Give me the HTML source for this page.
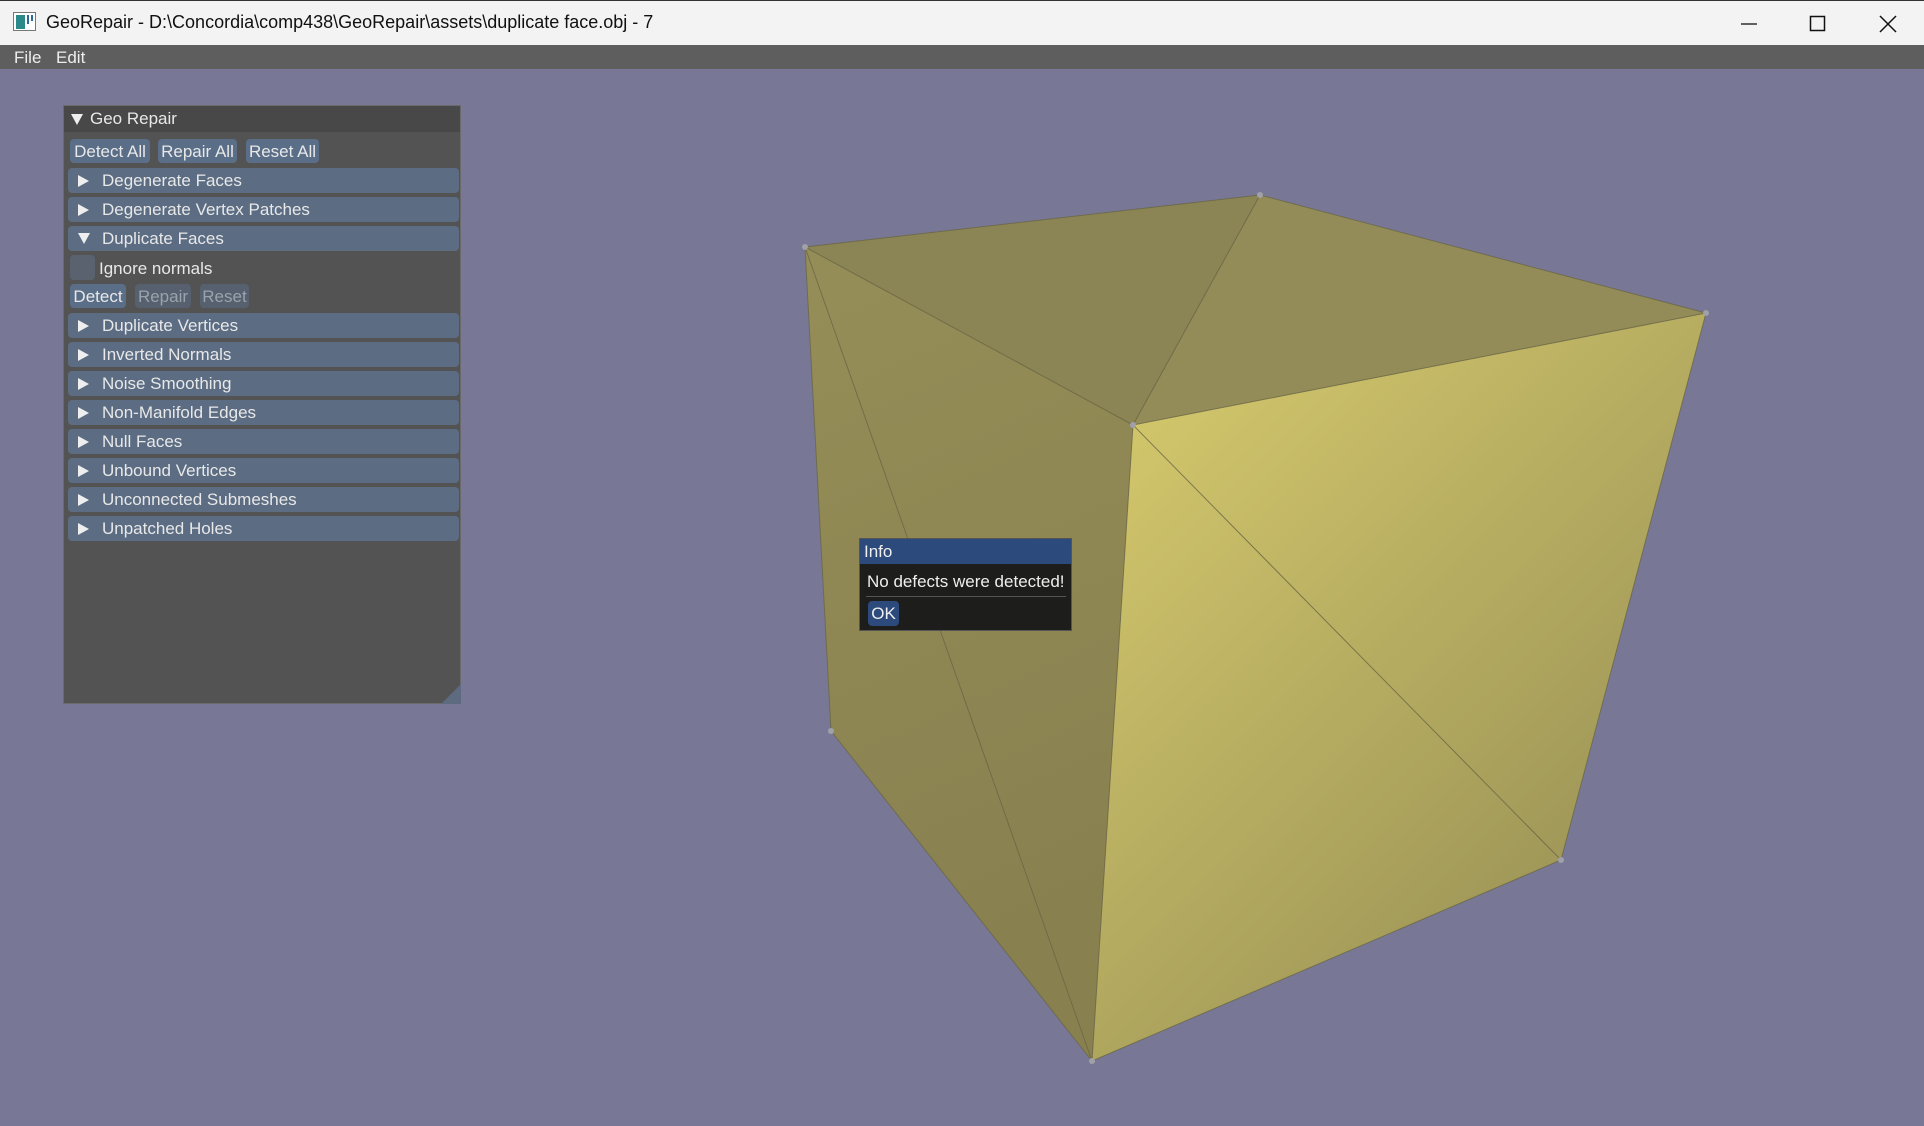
<!DOCTYPE html>
<html><head><meta charset="utf-8"><style>
*{margin:0;padding:0;box-sizing:border-box}
body{width:1924px;height:1126px;overflow:hidden;background:#787896;font-family:"Liberation Sans",sans-serif;position:relative}
#tb{position:absolute;left:0;top:0;width:1924px;height:45px;background:#f3f3f3;border-top:1px solid #333}
#tb .t{position:absolute;left:46px;top:11px;font-family:"Liberation Sans",sans-serif;font-size:18px;color:#111}
#menu{position:absolute;left:0;top:45px;width:1924px;height:24px;background:#5e5e5e;color:#eee;font-size:17px}
#menu span{position:absolute;top:3px}
.ab{position:absolute;white-space:nowrap}
#panel{position:absolute;left:63px;top:105px;width:398px;height:599px;background:#535353;border:1px solid #6a6a6a}
#ph{position:absolute;left:0;top:0;width:100%;height:26px;background:#484848;color:#e8e8e8;font-size:17px}
.btn{position:absolute;height:24px;background:#5a6e88;color:#e8e8e8;font-size:17px;border-radius:4px;line-height:25px;text-align:center}
.btn.dis{color:#9aa3ad;background:#56606e}
.hd{position:absolute;left:4px;width:391px;height:25px;background:#5b6c83;border-radius:4px;color:#e8e8e8;font-size:17px;line-height:26px}
.hd .tx{position:absolute;left:34px}
.tri{position:absolute;left:10px;top:7px;width:0;height:0;border-top:6px solid transparent;border-bottom:6px solid transparent;border-left:11px solid #eee}
.trd{position:absolute;width:0;height:0;border-left:6px solid transparent;border-right:6px solid transparent;border-top:11px solid #eee}
</style></head><body>
<div id="tb">
<svg class="ab" style="left:13px;top:11px" width="24" height="20"><rect x="0.5" y="0.5" width="22" height="18" fill="#fff" stroke="#777"/><rect x="3" y="3" width="9" height="14" fill="#2a8a8a"/><rect x="14" y="3" width="2" height="9" fill="#2a6a9a"/><rect x="18" y="3" width="2" height="6" fill="#2a6a9a"/></svg>
<div class="t">GeoRepair - D:\Concordia\comp438\GeoRepair\assets\duplicate face.obj - 7</div>
<svg class="ab" style="left:1740px;top:14px" width="18" height="18"><line x1="1" y1="9" x2="17" y2="9" stroke="#111" stroke-width="1.3"/></svg>
<svg class="ab" style="left:1809px;top:14px" width="18" height="18"><rect x="1.5" y="1.5" width="14" height="14" fill="none" stroke="#111" stroke-width="1.5"/></svg>
<svg class="ab" style="left:1879px;top:14px" width="18" height="18"><path d="M1 1L17 17M17 1L1 17" stroke="#111" stroke-width="1.5"/></svg>
</div>
<div id="menu"><span style="left:14px">File</span><span style="left:56px">Edit</span></div>

<svg class="ab" style="left:0;top:0" width="1924" height="1126">
<defs>
<linearGradient id="gr" x1="1133" y1="425" x2="1600" y2="900" gradientUnits="userSpaceOnUse"><stop offset="0" stop-color="#d1c56b"/><stop offset="1" stop-color="#9c9457"/></linearGradient>
<linearGradient id="gl" x1="830" y1="300" x2="1100" y2="900" gradientUnits="userSpaceOnUse"><stop offset="0" stop-color="#958d57"/><stop offset="1" stop-color="#88804f"/></linearGradient>
</defs>
<polygon points="805,247 1260,195 1133,425" fill="#8b8454"/>
<polygon points="1260,195 1706,313 1133,425" fill="#938c58"/>
<polygon points="805,247 1133,425 1092,1061 831,731" fill="url(#gl)"/>
<polygon points="1133,425 1706,313 1561,860 1092,1061" fill="url(#gr)"/>
<g stroke="#6a6645" stroke-width="1" fill="none" opacity="0.8">
<polygon points="805,247 1260,195 1706,313 1561,860 1092,1061 831,731"/>
<line x1="805" y1="247" x2="1133" y2="425"/><line x1="1706" y1="313" x2="1133" y2="425"/>
<line x1="1260" y1="195" x2="1133" y2="425"/><line x1="1133" y1="425" x2="1092" y2="1061"/>
<line x1="805" y1="247" x2="1092" y2="1061"/><line x1="1133" y1="425" x2="1561" y2="860"/>
</g>
<g fill="#a0a0a8"><circle cx="805" cy="247" r="3"/><circle cx="1260" cy="195" r="3"/><circle cx="1706" cy="313" r="3"/><circle cx="1133" cy="425" r="3"/><circle cx="831" cy="731" r="3"/><circle cx="1092" cy="1061" r="3"/><circle cx="1561" cy="860" r="3"/></g>
</svg>

<div id="panel">
<div id="ph"><div class="trd" style="left:7px;top:8px"></div><span class="ab" style="left:26px;top:3px">Geo Repair</span></div>
<div class="btn" style="left:6px;top:33px;width:80px">Detect All</div>
<div class="btn" style="left:94px;top:33px;width:79px">Repair All</div>
<div class="btn" style="left:182px;top:33px;width:73px">Reset All</div>
<div class="hd" style="top:62px"><div class="tri"></div><span class="tx">Degenerate Faces</span></div>
<div class="hd" style="top:91px"><div class="tri"></div><span class="tx">Degenerate Vertex Patches</span></div>
<div class="hd" style="top:120px"><div class="trd" style="left:10px;top:7px"></div><span class="tx">Duplicate Faces</span></div>
<div class="ab" style="left:6px;top:149px;width:25px;height:25px;background:#5a6270;border-radius:4px"></div>
<span class="ab" style="left:35px;top:153px;color:#e8e8e8;font-size:17px">Ignore normals</span>
<div class="btn" style="left:6px;top:178px;width:56px">Detect</div>
<div class="btn dis" style="left:71px;top:178px;width:56px">Repair</div>
<div class="btn dis" style="left:136px;top:178px;width:49px">Reset</div>
<div class="hd" style="top:207px"><div class="tri"></div><span class="tx">Duplicate Vertices</span></div>
<div class="hd" style="top:236px"><div class="tri"></div><span class="tx">Inverted Normals</span></div>
<div class="hd" style="top:265px"><div class="tri"></div><span class="tx">Noise Smoothing</span></div>
<div class="hd" style="top:294px"><div class="tri"></div><span class="tx">Non-Manifold Edges</span></div>
<div class="hd" style="top:323px"><div class="tri"></div><span class="tx">Null Faces</span></div>
<div class="hd" style="top:352px"><div class="tri"></div><span class="tx">Unbound Vertices</span></div>
<div class="hd" style="top:381px"><div class="tri"></div><span class="tx">Unconnected Submeshes</span></div>
<div class="hd" style="top:410px"><div class="tri"></div><span class="tx">Unpatched Holes</span></div>
<svg class="ab" style="left:377px;top:578px" width="20" height="20"><polygon points="20,0 20,20 0,20" fill="#5d6a80"/></svg>
</div>

<div class="ab" style="left:859px;top:538px;width:213px;height:93px;background:#1d1d1b;border:1px solid #555">
<div class="ab" style="left:0;top:0;width:100%;height:25px;background:#2c4a7c;color:#eee;font-size:17px;padding:3px 4px">Info</div>
<span class="ab" style="left:7px;top:33px;color:#eee;font-size:17px">No defects were detected!</span>
<div class="ab" style="left:6px;top:57px;width:200px;height:1px;background:#555"></div>
<div class="ab" style="left:8px;top:62px;width:31px;height:25px;background:#2c4a7c;border-radius:4px;color:#eee;font-size:17px;text-align:center;line-height:25px">OK</div>
</div>
</body></html>
